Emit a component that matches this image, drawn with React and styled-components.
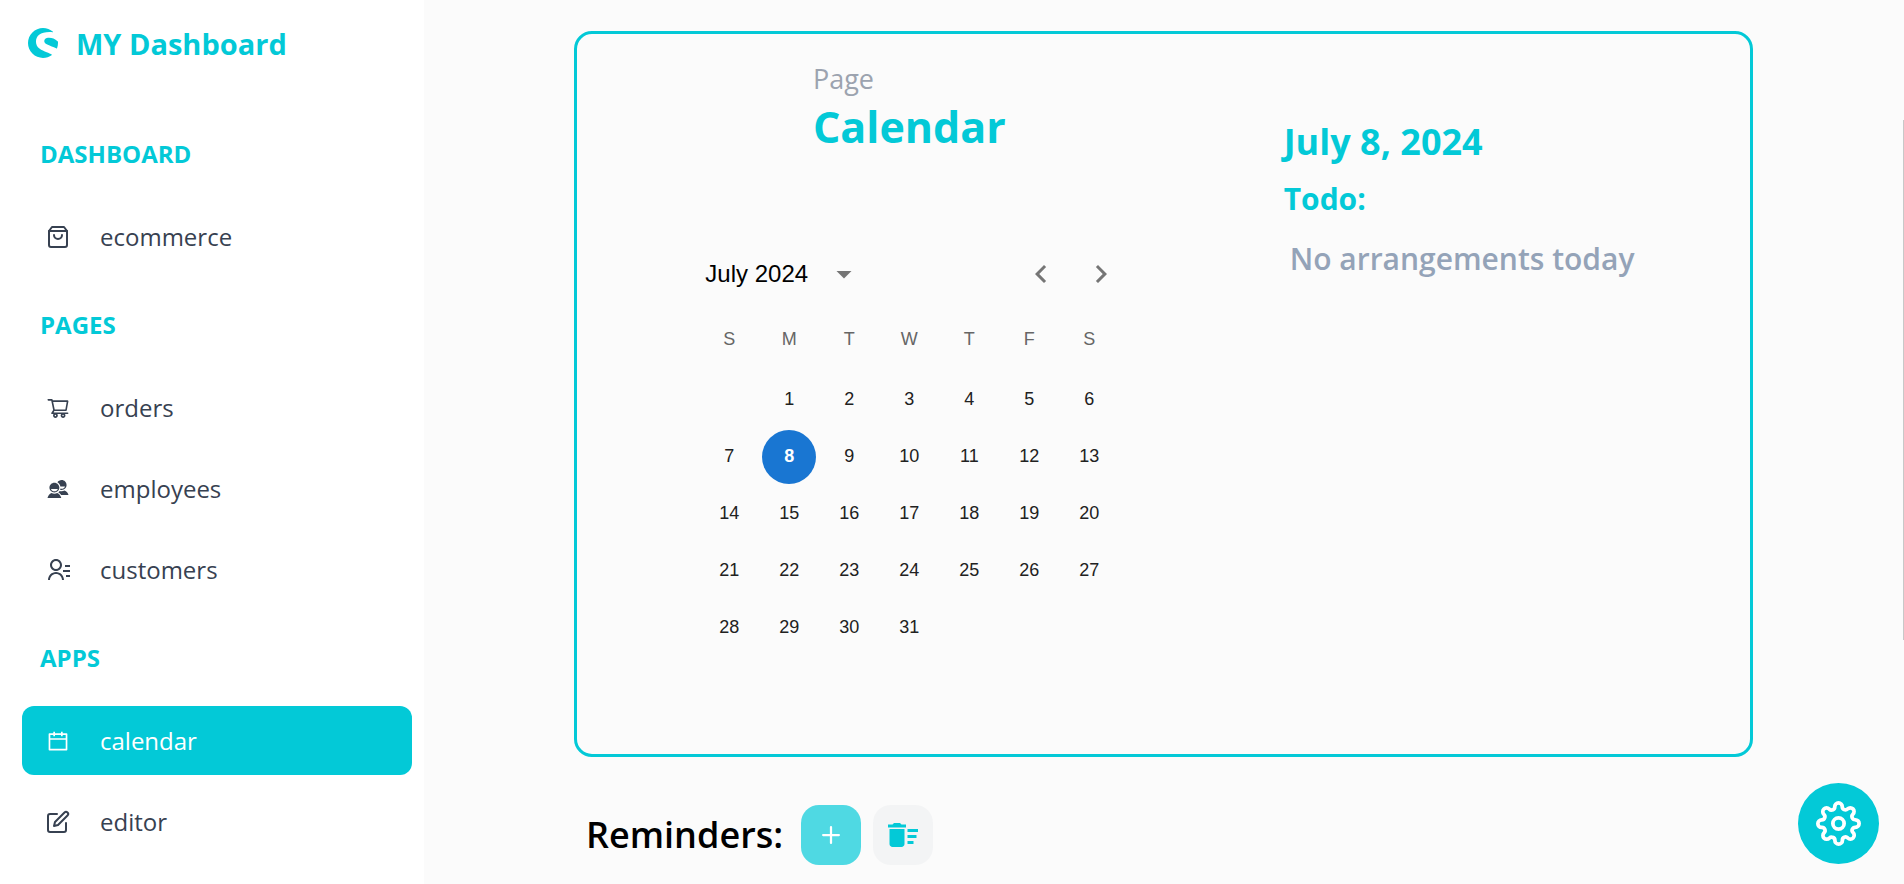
import React from "react";
import styled, { createGlobalStyle } from "styled-components";
import { SiShopware } from "react-icons/si";
import { FiShoppingBag, FiEdit, FiSettings } from "react-icons/fi";
import { AiOutlineShoppingCart, AiOutlineCalendar } from "react-icons/ai";
import { IoMdContacts } from "react-icons/io";
import { RiContactsLine } from "react-icons/ri";
import { MdArrowDropDown, MdChevronLeft, MdChevronRight, MdDeleteSweep } from "react-icons/md";
import { BsPlus } from "react-icons/bs";

const teal = "#03c9d7";

const GlobalStyle = createGlobalStyle`
  *, *::before, *::after { box-sizing: border-box; }
  body {
    margin: 0;
    background: #fbfbfb;
    font-family: "Open Sans", sans-serif;
    color: #000;
  }
  button { font: inherit; border: 0; padding: 0; cursor: pointer; }
  h1, h2, h3, p, ul { margin: 0; padding: 0; }
  svg { display: block; flex: none; }
`;

const Layout = styled.div`
  display: flex;
  height: 100vh;
  overflow: hidden;
`;

const Sidebar = styled.aside`
  flex: none;
  width: 424px;
  padding: 20px 12px 0 22px;
  background: #fff;
  overflow: hidden;
`;

const Brand = styled.a`
  display: flex;
  align-items: center;
  gap: 18px;
  height: 46px;
  padding-left: 6px;
  margin-bottom: 34px;
  color: ${teal};
  font-size: 29px;
  font-weight: 700;
  text-decoration: none;
`;

const NavSection = styled.section`
  padding-top: 36px;
`;

const NavTitle = styled.h2`
  padding-left: 18px;
  margin-bottom: 30px;
  color: ${teal};
  font-size: 24px;
  line-height: 36px;
  font-weight: 700;
  text-transform: uppercase;
`;

const NavList = styled.ul`
  display: flex;
  flex-direction: column;
  gap: 12px;
  list-style: none;
`;

const NavLink = styled.a`
  display: flex;
  align-items: center;
  gap: 30px;
  height: 69px;
  padding-left: 24px;
  border-radius: 12px;
  background: ${(p) => (p.$active ? teal : "transparent")};
  color: ${(p) => (p.$active ? "#fff" : "#374151")};
  font-size: 24px;
  text-decoration: none;
`;

const Main = styled.main`
  flex: 1;
  min-width: 0;
  padding: 31px 151px 0 150px;
  overflow: hidden;
`;

const Card = styled.section`
  display: grid;
  grid-template-columns: 17fr 13fr;
  min-height: 726px;
  border: 3px solid ${teal};
  border-radius: 18px;
`;

const CalendarColumn = styled.div`
  display: flex;
  flex-direction: column;
  align-items: center;
  padding-top: 24px;
`;

const PageLabel = styled.p`
  color: #9ca3af;
  font-size: 27px;
  line-height: 42px;
`;

const PageTitle = styled.h1`
  color: ${teal};
  font-size: 43px;
  line-height: 54px;
  font-weight: 700;
`;

const DateCalendar = styled.div`
  width: 480px;
  margin-top: 90px;
  font-family: "Liberation Sans", Arial, sans-serif;
`;

const MonthBar = styled.div`
  display: flex;
  align-items: center;
  height: 60px;
  padding: 0 18px 0 36px;
`;

const MonthToggle = styled.button`
  display: flex;
  align-items: center;
  gap: 18px;
  margin-right: auto;
  background: none;
  font-size: 24px;
  svg { color: #757575; }
`;

const ArrowButton = styled.button`
  display: grid;
  place-items: center;
  width: 60px;
  height: 60px;
  background: none;
  color: #757575;
`;

const MonthTable = styled.table`
  width: 420px;
  margin: 3px auto 0;
  border-collapse: collapse;
  table-layout: fixed;
  font-size: 18px;
  th {
    height: 64px;
    padding: 0;
    color: #666;
    font-weight: 400;
  }
  td {
    height: 57px;
    padding: 0;
  }
`;

const Day = styled.button`
  display: block;
  width: 54px;
  height: 54px;
  margin: 0 auto;
  border-radius: 50%;
  background: ${(p) => (p.$selected ? "#1976d2" : "transparent")};
  color: ${(p) => (p.$selected ? "#fff" : "#212121")};
  font-weight: ${(p) => (p.$selected ? 700 : 400)};
`;

const Agenda = styled.div`
  padding: 81px 20px 0 42px;
`;

const AgendaDate = styled.h2`
  color: ${teal};
  font-size: 36px;
  line-height: 54px;
  font-weight: 700;
`;

const AgendaTitle = styled.h3`
  margin-top: 9px;
  color: ${teal};
  font-size: 30px;
  line-height: 42px;
  font-weight: 700;
`;

const AgendaEmpty = styled.p`
  margin-top: 18px;
  padding-left: 6px;
  color: #94a3b8;
  font-size: 30px;
  line-height: 42px;
  font-weight: 600;
`;

const Reminders = styled.section`
  display: flex;
  align-items: center;
  gap: 12px;
  padding: 48px 0 0 12px;
`;

const RemindersTitle = styled.h2`
  margin-right: 6px;
  font-size: 36px;
  line-height: 54px;
  font-weight: 600;
`;

const ToolButton = styled.button`
  display: grid;
  place-items: center;
  width: 60px;
  height: 60px;
  border-radius: 18px;
  background: ${(p) => (p.$primary ? "#4fd9e3" : "#f3f4f5")};
  color: ${(p) => (p.$primary ? "#fff" : teal)};
`;

const SettingsButton = styled.button`
  position: fixed;
  right: 25px;
  bottom: 20px;
  display: grid;
  place-items: center;
  width: 81px;
  height: 81px;
  border-radius: 50%;
  background: ${teal};
  color: #fff;
`;

const ScrollThumb = styled.div`
  position: fixed;
  top: 120px;
  right: 0;
  width: 1px;
  height: 520px;
  background: #c8c8c8;
`;

const sections = [
  { title: "Dashboard", items: [["ecommerce", FiShoppingBag]] },
  {
    title: "Pages",
    items: [
      ["orders", AiOutlineShoppingCart],
      ["employees", IoMdContacts],
      ["customers", RiContactsLine],
    ],
  },
  {
    title: "Apps",
    items: [
      ["calendar", AiOutlineCalendar],
      ["editor", FiEdit],
    ],
  },
];

const weekdays = ["S", "M", "T", "W", "T", "F", "S"];
const weeks = Array.from({ length: 5 }, (_, w) =>
  Array.from({ length: 7 }, (_, d) => {
    const n = w * 7 + d;
    return n >= 1 && n <= 31 ? n : null;
  })
);

export default function App() {
  const [selected, setSelected] = React.useState(8);
  return (
    <>
      <GlobalStyle />
      <Layout>
        <Sidebar>
          <Brand href="#home">
            <SiShopware size={30} />
            <span>MY Dashboard</span>
          </Brand>
          <nav>
            {sections.map((s) => (
              <NavSection key={s.title}>
                <NavTitle>{s.title}</NavTitle>
                <NavList>
                  {s.items.map(([name, Icon]) => (
                    <li key={name}>
                      <NavLink href={"#" + name} $active={name === "calendar"}>
                        <Icon size={24} />
                        <span>{name}</span>
                      </NavLink>
                    </li>
                  ))}
                </NavList>
              </NavSection>
            ))}
          </nav>
        </Sidebar>
        <Main>
          <Card>
            <CalendarColumn>
              <header>
                <PageLabel>Page</PageLabel>
                <PageTitle>Calendar</PageTitle>
              </header>
              <DateCalendar>
                <MonthBar>
                  <MonthToggle>
                    July 2024
                    <MdArrowDropDown size={36} />
                  </MonthToggle>
                  <ArrowButton aria-label="Previous month">
                    <MdChevronLeft size={36} />
                  </ArrowButton>
                  <ArrowButton aria-label="Next month">
                    <MdChevronRight size={36} />
                  </ArrowButton>
                </MonthBar>
                <MonthTable>
                  <thead>
                    <tr>
                      {weekdays.map((d, i) => (
                        <th key={i} scope="col">{d}</th>
                      ))}
                    </tr>
                  </thead>
                  <tbody>
                    {weeks.map((week, w) => (
                      <tr key={w}>
                        {week.map((n, i) => (
                          <td key={i}>
                            {n && (
                              <Day $selected={n === selected} onClick={() => setSelected(n)}>
                                {n}
                              </Day>
                            )}
                          </td>
                        ))}
                      </tr>
                    ))}
                  </tbody>
                </MonthTable>
              </DateCalendar>
            </CalendarColumn>
            <Agenda>
              <AgendaDate>July {selected}, 2024</AgendaDate>
              <AgendaTitle>Todo:</AgendaTitle>
              <AgendaEmpty>No arrangements today</AgendaEmpty>
            </Agenda>
          </Card>
          <Reminders>
            <RemindersTitle>Reminders:</RemindersTitle>
            <ToolButton $primary aria-label="Add reminder">
              <BsPlus size={36} />
            </ToolButton>
            <ToolButton aria-label="Clear reminders">
              <MdDeleteSweep size={36} />
            </ToolButton>
          </Reminders>
        </Main>
      </Layout>
      <SettingsButton aria-label="Settings">
        <FiSettings size={45} />
      </SettingsButton>
      <ScrollThumb />
    </>
  );
}
